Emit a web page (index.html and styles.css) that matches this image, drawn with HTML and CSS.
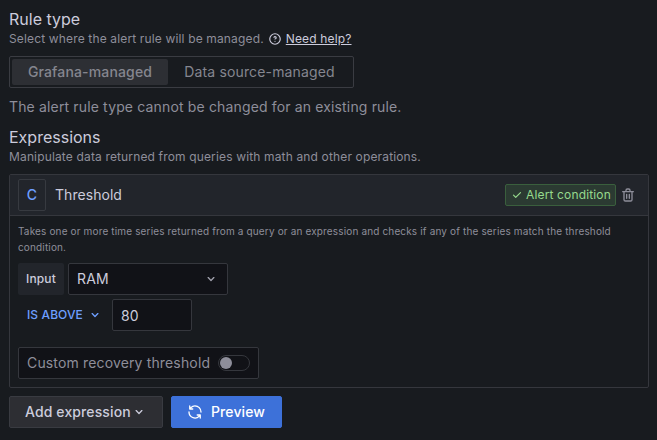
FILE: index.html
```html
<!DOCTYPE html>
<html lang="en">
<head>
<meta charset="utf-8">
<title>Alert rule</title>
<link rel="stylesheet" href="styles.css">
</head>
<body>
<main class="page">
  <section class="rule-type">
    <h2 class="title">Rule type</h2>
    <p class="subtitle">
      <span class="subtitle-text">Select where the alert rule will be managed.</span>
      <svg class="icon help-icon" viewBox="0 0 24 24"><path d="M11.29,15.29a1.58,1.58,0,0,0-.12.15.76.76,0,0,0-.09.18.64.64,0,0,0-.06.18,1.36,1.36,0,0,0,0,.2.84.84,0,0,0,.08.38.9.9,0,0,0,.54.54.94.94,0,0,0,.76,0,.9.9,0,0,0,.54-.54A1,1,0,0,0,13,16a1,1,0,0,0-.29-.71A1,1,0,0,0,11.29,15.29ZM12,2A10,10,0,1,0,22,12,10,10,0,0,0,12,2Zm0,18a8,8,0,1,1,8-8A8,8,0,0,1,12,20ZM12,7A3,3,0,0,0,9.4,8.5a1,1,0,1,0,1.73,1A1,1,0,0,1,12,9a1,1,0,0,1,0,2,1,1,0,1,0,0,2A3,3,0,0,0,12,7Z"/></svg>
      <a class="help-link">Need help?</a>
    </p>
    <div class="radio-group">
      <span class="radio radio-active">Grafana-managed</span>
      <span class="radio">Data source-managed</span>
    </div>
    <p class="note">The alert rule type cannot be changed for an existing rule.</p>
  </section>

  <section class="expressions">
    <h2 class="title">Expressions</h2>
    <p class="subtitle">Manipulate data returned from queries with math and other operations.</p>
    <div class="card">
      <header class="card-header">
        <span class="ref-id">C</span>
        <span class="card-name">Threshold</span>
        <span class="badge">
          <svg class="icon badge-icon" viewBox="0 0 24 24"><path d="M18.71,7.21a1,1,0,0,0-1.42,0L9.84,14.67,6.71,11.53A1,1,0,1,0,5.29,13l3.84,3.84a1,1,0,0,0,1.42,0l8.16-8.16A1,1,0,0,0,18.71,7.21Z"/></svg>
          <span>Alert condition</span>
        </span>
        <svg class="icon trash-icon" viewBox="0 0 24 24"><path d="M10,18a1,1,0,0,0,1-1V11a1,1,0,0,0-2,0v6A1,1,0,0,0,10,18ZM20,6H16V5a3,3,0,0,0-3-3H11A3,3,0,0,0,8,5V6H4A1,1,0,0,0,4,8H5V19a3,3,0,0,0,3,3h8a3,3,0,0,0,3-3V8h1a1,1,0,0,0,0-2ZM10,5a1,1,0,0,1,1-1h2a1,1,0,0,1,1,1V6H10Zm7,14a1,1,0,0,1-1,1H8a1,1,0,0,1-1-1V8H17Zm-3-1a1,1,0,0,0,1-1V11a1,1,0,0,0-2,0v6A1,1,0,0,0,14,18Z"/></svg>
      </header>
      <div class="card-body">
        <p class="description">Takes one or more time series returned from a query or an expression and checks if any of the series match the threshold condition.</p>
        <div class="row">
          <span class="label">Input</span>
          <div class="select">
            <span>RAM</span>
            <svg class="icon select-icon" viewBox="0 0 24 24"><path d="M17,9.17a1,1,0,0,0-1.41,0L12,12.71,8.46,9.17a1,1,0,0,0-1.41,0,1,1,0,0,0,0,1.42l4.24,4.24a1,1,0,0,0,1.42,0L17,10.59A1,1,0,0,0,17,9.17Z"/></svg>
          </div>
        </div>
        <div class="row row-threshold">
          <span class="operator">
            <span>IS ABOVE</span>
            <svg class="icon" viewBox="0 0 24 24"><path d="M17,9.17a1,1,0,0,0-1.41,0L12,12.71,8.46,9.17a1,1,0,0,0-1.41,0,1,1,0,0,0,0,1.42l4.24,4.24a1,1,0,0,0,1.42,0L17,10.59A1,1,0,0,0,17,9.17Z"/></svg>
          </span>
          <span class="number">80</span>
        </div>
        <div class="recovery">
          <span>Custom recovery threshold</span>
          <span class="switch"><span class="knob"></span></span>
        </div>
      </div>
    </div>
  </section>

  <div class="actions">
    <button class="button button-secondary">
      <span>Add expression</span>
      <svg class="icon" viewBox="0 0 24 24"><path d="M17,9.17a1,1,0,0,0-1.41,0L12,12.71,8.46,9.17a1,1,0,0,0-1.41,0,1,1,0,0,0,0,1.42l4.24,4.24a1,1,0,0,0,1.42,0L17,10.59A1,1,0,0,0,17,9.17Z"/></svg>
    </button>
    <button class="button button-primary">
      <svg class="icon" viewBox="0 0 24 24"><path d="M19.91,15.51H15.38a1,1,0,0,0,0,2h2.4A8,8,0,0,1,4,12a1,1,0,0,0-2,0,10,10,0,0,0,16.88,7.23V21a1,1,0,0,0,2,0V16.5A1,1,0,0,0,19.91,15.51ZM12,2A10,10,0,0,0,5.12,4.77V3a1,1,0,0,0-2,0V7.5a1,1,0,0,0,1,1h4.5a1,1,0,0,0,0-2H6.22A8,8,0,0,1,20,12a1,1,0,0,0,2,0A10,10,0,0,0,12,2Z"/></svg>
      <span>Preview</span>
    </button>
  </div>
</main>
</body>
</html>
```
FILE: styles.css
```css
* {
  box-sizing: border-box;
}

body {
  margin: 0;
  background: #181b1f;
  color: #ccccdc;
  font-family: Inter, "Liberation Sans", sans-serif;
  font-size: 14px;
  line-height: 22px;
  letter-spacing: 0.15px;
}

.page {
  height: 440px;
  padding: 8px 8px 0 9px;
  overflow: hidden;
}

.icon {
  display: block;
  flex: none;
  width: 16px;
  height: 16px;
  fill: currentColor;
}

.title {
  margin: 0;
  font-size: 16px;
  font-weight: 400;
  line-height: 22px;
  letter-spacing: 0;
}

.subtitle {
  display: flex;
  align-items: center;
  margin: 0 0 8px;
  color: #8e8e9a;
  font-size: 12px;
  line-height: 18px;
}

.help-icon {
  width: 14px;
  height: 14px;
  margin: 0 4px;
  color: #ccccdc;
}

.help-link {
  color: #ccccdc;
  text-decoration: underline;
}

.radio-group {
  display: flex;
  width: 345px;
  height: 32px;
  padding: 2px;
  border: 1px solid #3a3c42;
  border-radius: 2px;
}

.radio {
  flex: 1;
  color: #85868f;
  line-height: 26px;
  text-align: center;
}

.radio-active {
  flex: none;
  width: 156px;
  border-radius: 2px;
  background: #2d2f34;
  font-weight: 550;
}

.note {
  margin: 8px 0;
  color: #8e8e9a;
}

.card {
  width: 640px;
  height: 214px;
  border: 1px solid #35373d;
  border-radius: 2px;
}

.card-header {
  display: flex;
  align-items: center;
  height: 41px;
  padding: 0 12px 0 8px;
  border-bottom: 1px solid #35373d;
  background: #22252b;
}

.ref-id {
  width: 28px;
  height: 32px;
  margin-right: 9px;
  border: 1px solid #373a40;
  border-radius: 2px;
  color: #6e9fff;
  font-weight: 500;
  line-height: 30px;
  text-align: center;
}

.card-name {
  letter-spacing: 0.05px;
}

.badge {
  display: flex;
  align-items: center;
  gap: 2px;
  width: 111px;
  height: 22px;
  margin-left: auto;
  padding-left: 4px;
  border: 1px solid #3a5f3d;
  border-radius: 2px;
  background: #2b3a32;
  color: #96d98d;
  font-size: 12px;
  line-height: 20px;
  white-space: nowrap;
}

.badge-icon {
  width: 14px;
  height: 14px;
}

.trash-icon {
  margin-left: 4px;
  color: #8e8e9a;
}

.card-body {
  padding: 7px 8px 8px;
}

.description {
  margin: 0 0 8px;
  color: #8e8e9a;
  font-size: 10px;
  line-height: 16px;
}

.row {
  display: flex;
  gap: 4px;
}

.label {
  width: 46px;
  height: 32px;
  border-radius: 2px;
  background: #22252b;
  font-size: 12px;
  font-weight: 550;
  line-height: 32px;
  text-align: center;
}

.select {
  display: flex;
  align-items: center;
  justify-content: space-between;
  width: 160px;
  height: 32px;
  padding: 0 8px;
  border: 1px solid #35373d;
  border-radius: 2px;
  background: #111217;
}

.select-icon {
  color: #a0a0ac;
}

.row-threshold {
  margin-top: 4px;
}

.operator {
  display: flex;
  align-items: center;
  gap: 4px;
  width: 90px;
  height: 32px;
  padding-left: 9px;
  color: #6e9fff;
  font-size: 12px;
  font-weight: 500;
  letter-spacing: 0.1px;
}

.number {
  width: 80px;
  height: 32px;
  padding-left: 8px;
  border: 1px solid #35373d;
  border-radius: 2px;
  background: #111217;
  line-height: 32px;
}

.recovery {
  display: flex;
  align-items: center;
  justify-content: space-between;
  width: 241px;
  height: 32px;
  margin-top: 16px;
  padding: 0 8px;
  border: 1px solid #35373d;
  border-radius: 2px;
  background: #111217;
  color: #8e8e9a;
}

.switch {
  display: flex;
  align-items: center;
  width: 32px;
  height: 16px;
  padding-left: 1px;
  border: 1px solid #35373d;
  border-radius: 8px;
}

.knob {
  width: 12px;
  height: 12px;
  border-radius: 50%;
  background: #8e8e9a;
}

.actions {
  display: flex;
  gap: 8px;
  margin-top: 8px;
}

.button {
  display: flex;
  align-items: center;
  height: 32px;
  border: 1px solid #393b41;
  border-radius: 2px;
  font: inherit;
  font-weight: 550;
  letter-spacing: 0.12px;
}

.button-secondary {
  width: 154px;
  padding: 0 0 0 15px;
  background: #2d2e33;
  color: #ccccdc;
}

.button-primary {
  gap: 8px;
  width: 111px;
  padding: 0 0 0 15px;
  border-color: #3d71d9;
  background: #3d71d9;
  color: #fff;
}
```
